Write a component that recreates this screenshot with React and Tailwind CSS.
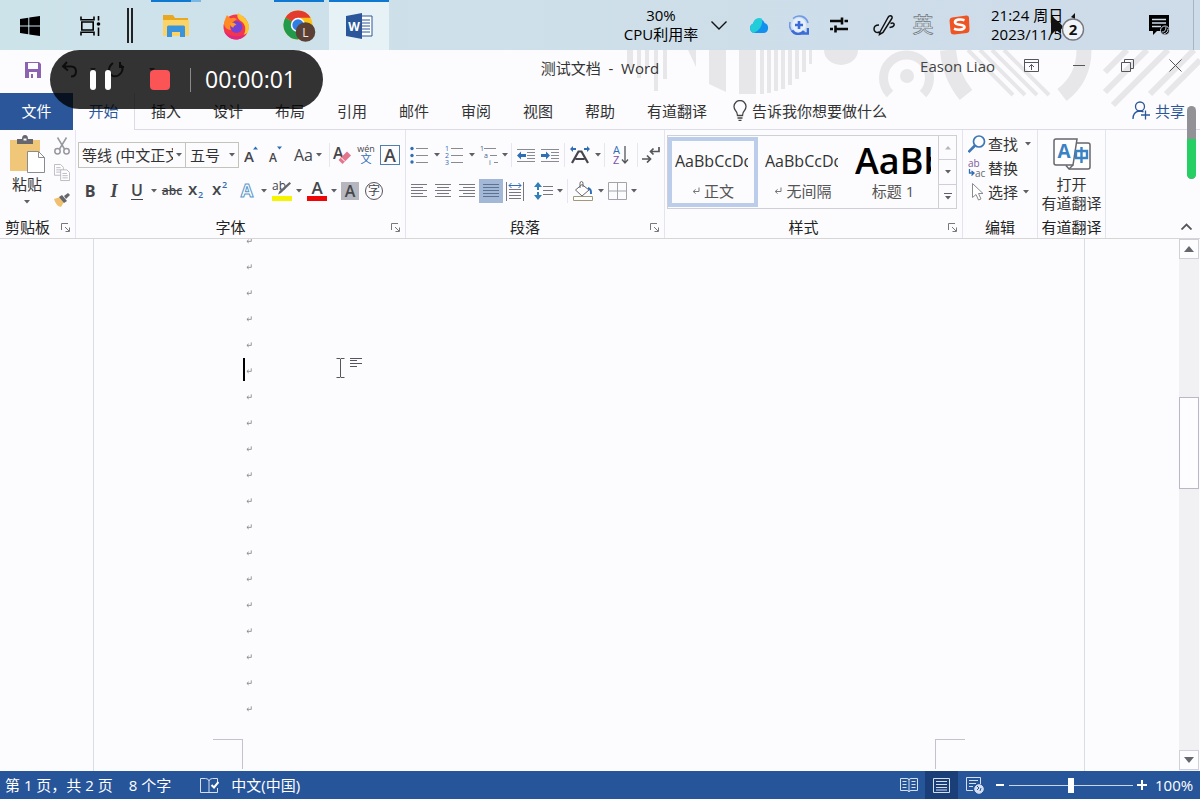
import { useState } from "react";

const TABS = ["开始", "插入", "设计", "布局", "引用", "邮件", "审阅", "视图", "帮助"];

const Caret = () => (
  <svg width="6" height="4" viewBox="0 0 6 4" className="shrink-0" aria-hidden="true">
    <path d="M0 0h6L3 3.5z" fill="#5f6066" />
  </svg>
);

const ReturnMark = ({ size = 6 }) => (
  <svg width={size} height={size} viewBox="0 0 8 8" className="shrink-0" aria-hidden="true">
    <path d="M7 0.5V4.5H1.5M3.6 2.4L1.2 4.5L3.6 6.6" fill="none" stroke="#77777c" strokeWidth="1" />
  </svg>
);

const Tool = ({ label, className = "w-6", children }) => (
  <button
    aria-label={label}
    className={`flex h-6 shrink-0 items-center justify-center text-[#44464b] hover:bg-[#d5e1f2] ${className}`}
  >
    {children}
  </button>
);

const Divider = () => <span className="mx-0.5 h-6 w-px shrink-0 bg-[#e6e6ee]" />;

const Group = ({ name, launcher = true, className, children }) => (
  <section aria-label={name} className={`flex shrink-0 flex-col border-r border-[#e4e4f0] ${className}`}>
    <div className="h-[86px]">{children}</div>
    <div className="flex h-[22px] items-center">
      <span className="flex-1 text-center leading-5 whitespace-nowrap">{name}</span>
      {launcher && (
        <button aria-label={`${name}设置`} className="flex w-5 justify-center">
          <svg width="9" height="9" viewBox="0 0 9 9" fill="none" stroke="#77777c">
            <path d="M0.5 7V0.5H7M4 4l4 4M8.5 4.5v4h-4" />
          </svg>
        </button>
      )}
    </div>
  </section>
);

/* ---------- Taskbar ---------- */

const TaskButton = ({ label, className = "", bar = "", children }) => (
  <button aria-label={label} className={`flex h-[50px] w-[60px] shrink-0 flex-col items-center ${className}`}>
    <span className={`h-[2px] w-full ${bar}`} />
    <span className="flex flex-1 items-center">{children}</span>
  </button>
);

const TrayButton = ({ label, className = "w-10", children }) => (
  <button aria-label={label} className={`flex h-[50px] shrink-0 items-center justify-center ${className}`}>
    {children}
  </button>
);

const Taskbar = () => (
  <header className="flex h-[50px] items-center bg-linear-to-r from-[#cde3ea] to-[#cedbe9] text-black">
    <TaskButton label="开始菜单">
      <svg width="20" height="20" viewBox="0 0 20 20">
        <path d="M0 3l8.3-1.2v7.8H0zM9.3 1.6L20 0v9.6H9.3zM0 10.5h8.3v7.8L0 17.1zM9.3 10.5H20V20L9.3 18.5z" />
      </svg>
    </TaskButton>
    <TaskButton label="任务视图">
      <svg width="21" height="20" viewBox="0 0 21 20" fill="none" stroke="#000" strokeWidth="1.6">
        <path d="M1 0.5v3.2h13V0.5M1 19.5v-3.2h13v3.2M1.8 6h11.4v8H1.8zM18.5 0v4.5M18.5 11.5V20" />
        <circle cx="18.5" cy="8" r="1.8" fill="#000" stroke="none" />
      </svg>
    </TaskButton>
    <span className="mr-[13px] ml-[7px] h-[35px] w-[6px] border-x-2 border-[#222]" />
    <TaskButton label="文件资源管理器" bar="bg-linear-to-r from-[#0f78d0] from-80% to-[#79b8e4] to-80% max-w-[50px]">
      <svg width="28" height="24" viewBox="0 0 28 24">
        <path d="M1 1h10l2 3h13v18H1z" fill="#e9a822" />
        <path d="M1 6h26v16H1z" fill="#fbd366" />
        <path d="M5 23V13q0-1.500 1.500-1.500h15q1.500 0 1.500 1.500v10h-5v-5h-8v5z" fill="#3a93dd" />
      </svg>
    </TaskButton>
    <TaskButton label="Firefox">
      <svg width="28" height="28" viewBox="0 0 28 28">
        <circle cx="14" cy="15" r="12.500" fill="#f4364c" />
        <path d="M16 1c5 3 10 7 11 13 0 7-4 11-8 12.500 3-3 5-7 4-12-1-4-4-5-6-7-2-2-2-4-1-6.500z" fill="#ffc52e" />
        <path d="M2 11C3 7 4 5 5 3c1 2 3 3 4 3.500C11 5 13 6 15 7l-4 3c-3 2-3 5-2 8-4 0-7-3-7-7z" fill="#ff8a25" />
        <path d="M2 19c2 5 7 8.500 12 8.500S23 25 25 21c-4 4-17 5-23-2z" fill="#e2257f" />
        <circle cx="14.500" cy="15" r="6" fill="#7542d8" />
        <path d="M8 11c3-1 5 0 6.500 2-2 0-3 1-3 2.500-2 0-3.500-2-3.500-4.500z" fill="#ff9b2a" />
      </svg>
    </TaskButton>
    <TaskButton label="Chrome" className="ml-[3px]" bar="bg-[#0f78d0] max-w-[50px]">
      <svg width="33" height="32" viewBox="0 0 33 32">
        <circle cx="15" cy="15" r="14.500" fill="#fbc116" />
        <path d="M15 15L2.440 7.750A14.500 14.500 0 0 1 27.560 7.750H15z" fill="#e33b2e" />
        <path d="M15 15L2.440 7.750A14.500 14.500 0 0 0 15 29.500L21.300 18.600z" fill="#229a4c" />
        <circle cx="15" cy="15" r="7.200" fill="#fff" />
        <circle cx="15" cy="15" r="5.700" fill="#2f7de6" />
        <circle cx="22.500" cy="22" r="9.800" fill="#5b4036" />
        <text x="22.500" y="26.500" fill="#f1e6e0" fontSize="12" textAnchor="middle">L</text>
      </svg>
    </TaskButton>
    <TaskButton label="Word" className="bg-[#e7f2f6]" bar="bg-[#0f78d0]">
      <svg width="27" height="26" viewBox="0 0 27 26">
        <path d="M13 3h13v20H13z" fill="#fff" stroke="#2b579a" />
        <path d="M16 7h8M16 10h8M16 13h8M16 16h8M16 19h8" stroke="#2b579a" />
        <path d="M0 3l16-3v26L0 23z" fill="#2b579a" />
        <text x="8" y="17.500" fill="#fff" fontSize="12" fontWeight="700" textAnchor="middle">W</text>
      </svg>
    </TaskButton>

    <div className="ml-auto flex items-center">
      <p className="w-[76px] text-center leading-[19px]">
        30%
        <br />
        CPU利用率
      </p>
      <TrayButton label="显示隐藏的图标">
        <svg width="16" height="9" viewBox="0 0 16 9" fill="none" stroke="#111" strokeWidth="1.400">
          <path d="M0.500 0.500L8 8l7.500-7.500" />
        </svg>
      </TrayButton>
      <TrayButton label="云盘">
        <svg width="20" height="17" viewBox="0 0 20 17">
          <path d="M5 16a5 5 0 0 1-.8-9.500A6 6 0 0 1 15.600 6 5.200 5.200 0 0 1 15 16z" fill="#1290ee" />
          <path d="M5 16a5 5 0 0 1-.8-9.500A6 6 0 0 1 13 1.800C14 8 11 13 5 16z" fill="#22cdda" />
        </svg>
      </TrayButton>
      <TrayButton label="电脑管家">
        <svg width="20" height="20" viewBox="0 0 20 20" fill="none">
          <circle cx="10" cy="10" r="7" fill="#e6effc" />
          <path d="M4 3.500A9 9 0 0 1 19 8M1.200 7A9 9 0 0 0 4 17" stroke="#6f9aea" strokeWidth="1.600" />
          <path d="M3 15.500c3 4.500 9 4.500 12 .5M13 18.500h6V13" stroke="#3c6cd6" strokeWidth="2.600" />
          <path d="M10 6v8M6 10h8" stroke="#3c6cd6" strokeWidth="2.600" />
        </svg>
      </TrayButton>
      <TrayButton label="音量设置">
        <svg width="18" height="16" viewBox="0 0 18 16" stroke="#0a0a0a" strokeWidth="2.600">
          <path d="M0 4h11M14.500 4H18M0 12h3M6.500 12H18M12 0.500v7M5.500 8.500v7" />
        </svg>
      </TrayButton>
      <TrayButton label="手写笔" className="w-[50px]">
        <svg width="22" height="22" viewBox="0 0 22 22" fill="none" stroke="#111" strokeWidth="1.500">
          <path d="M7 18L15 3.500q1.500-2.500 3.200-1.500T18.500 5L10 18.500 6.500 20.500zM6 11c-3.500 0-5 2-5 4s2 4.500 5.500 3M17.500 9.500c3-1.500 4.500.5 3 2.500-1 1.500-3 1-4 1.500" />
        </svg>
      </TrayButton>
      <TrayButton label="输入法" className="w-7">
        <svg width="22" height="24" viewBox="0 0 22 24">
          <text x="11" y="19" textAnchor="middle" fontSize="21" fill="#e8eef4" stroke="#6d7780" strokeWidth="0.700">
            英
          </text>
        </svg>
      </TrayButton>
      <TrayButton label="搜狗输入法" className="w-11">
        <svg width="21" height="20" viewBox="0 0 21 20">
          <path d="M3 2.500L17.500 0.500Q20 .5 20 3l.5 12q0 2.500-2.500 3L5 19.500Q2 19.500 1.600 17L.5 5.500Q.5 3 3 2.500z" fill="#ef5424" />
          <path
            d="M15.500 5.200C12 3.800 6 4.300 6 7.300c0 3.400 9.500 1.700 9.500 4.700 0 3-6.500 3.400-10.500 1.800"
            fill="none"
            stroke="#fff"
            strokeWidth="2.600"
          />
        </svg>
      </TrayButton>
      <p className="ml-[10px] w-[76px] leading-[19px] whitespace-nowrap">
        21:24 周日
        <br />
        2023/11/5
      </p>
      <TrayButton label="通知" className="ml-[72px] w-10">
        <svg width="22" height="21" viewBox="0 0 22 21">
          <path d="M1 0h20v13l-6 3H9l-4 4v-4H1z" />
          <path d="M4 4.500h14M4 8h14M4 11.500h9" stroke="#cedbe9" strokeWidth="1.500" />
          <circle cx="17" cy="15.500" r="4.500" stroke="#cedbe9" />
          <path d="M14 17q4 0 4-5M15.500 19q4.500-1 4.500-5" stroke="#cedbe9" fill="none" />
        </svg>
      </TrayButton>
      <span className="mr-[6px] ml-3.5 h-[50px] w-px bg-[#a9b4c0]" />
    </div>
  </header>
);

/* ---------- Title bar and tabs ---------- */

const TitlePattern = () => (
  <svg
    width="580"
    height="60"
    viewBox="620 50 580 60"
    className="pointer-events-none absolute top-0 right-0"
    fill="none"
    stroke="#e7e7e9"
    aria-hidden="true"
  >
    <g fill="#e7e7e9" stroke="none">
      <path d="M627 50h6v18h-6zM637 50h4v28h-4zM645 50h4v16h-4zM654 50h4v41h-4zM663 50h4v29h-4z" />
      <path d="M688 50h8v17zM709 50h17v42l-17-8zM739 50h17v44h-17z" />
      <path d="M760 50h4v44h-4zM767 50h4v43h-4zM774 50h4v41h-4zM781 50h4v39h-4zM788 50h4v35h-4zM795 50h4v29h-4zM802 50h4v22h-4zM809 50h3v14h-3z" />
      <path d="M824 50h34a17 15 0 0 1-34 0z" />
      <circle cx="907" cy="76" r="7" />
    </g>
    <path d="M890 94a23 23 0 1 1 33 0" strokeWidth="9" />
    <path d="M948 50q2 25 18 45" strokeWidth="16" />
    <path d="M1084 50q0 28-22 45" strokeWidth="15" />
    <path d="M968 50l45 45M980 50l45 45M992 50l45 45M1004 50l45 45" strokeWidth="4" />
    <path d="M1105 72l22-22M1105 92l42-42M1113 105l55-55M1150 94l44-44M1166 94l34-34" strokeWidth="6" />
  </svg>
);

const TitleBar = () => (
  <div className="relative grid h-[43px] grid-cols-[1fr_auto_1fr] items-center pb-2">
    <TitlePattern />
    <div className="flex items-center pt-1 pl-[25px] text-[#444]">
      <button aria-label="保存">
        <svg width="16" height="16" viewBox="0 0 16 16">
          <path d="M0 0h14l2 2v14H0z" fill="#8d62b0" />
          <path d="M3 1h10v6H3zM4 10h8v6H4z" fill="#fdfdff" />
          <path d="M6 12h2v4H6z" fill="#8d62b0" />
        </svg>
      </button>
      <button aria-label="撤消" className="ml-5 flex items-center gap-3">
        <svg width="17" height="17" viewBox="0 0 17 17" fill="none" stroke="#444" strokeWidth="2">
          <path d="M6 1L2 5.500l5 4M2 5.500h8q5 0 5 5t-5 5" />
        </svg>
        <Caret />
      </button>
      <button aria-label="重复" className="ml-3 flex items-center gap-6">
        <svg width="17" height="17" viewBox="0 0 17 17" fill="none" stroke="#444" strokeWidth="2">
          <path d="M12 1v5h4M13 4q3 4 0 8t-8 3q-4-2-4-6t4-7" />
        </svg>
        <Caret />
      </button>
    </div>
    <h1 className="relative text-[#333] whitespace-pre">测试文档  -  Word</h1>
    <div className="relative flex items-center justify-end pb-1 text-[#444]">
      <button className="mr-3">Eason Liao</button>
      <button aria-label="功能区显示选项" className="flex h-6 w-12 items-center justify-center">
        <svg width="15" height="13" viewBox="0 0 15 13" fill="none" stroke="#55565b">
          <path d="M0.500 0.500h14v12H0.500zM0.500 3.500h14M7.500 11V5.500M5 8l2.500-2.500L10 8" />
        </svg>
      </button>
      <button aria-label="最小化" className="flex h-6 w-12 items-center justify-center">
        <span className="h-px w-3 bg-[#55565b]" />
      </button>
      <button aria-label="还原" className="flex h-6 w-12 items-center justify-center">
        <svg width="13" height="13" viewBox="0 0 13 13" fill="none" stroke="#55565b">
          <path d="M0.500 3.500h9v9h-9zM3.500 3.500v-3h9v9h-3" />
        </svg>
      </button>
      <button aria-label="关闭" className="mr-px flex h-6 w-12 items-center justify-center">
        <svg width="13" height="13" viewBox="0 0 13 13" fill="none" stroke="#55565b">
          <path d="M0.500 0.500l12 12M12.500 0.500l-12 12" />
        </svg>
      </button>
    </div>
  </div>
);

const TabBar = ({ active, onSelect }) => (
  <nav className="relative flex h-[37px] text-[#333]">
    <button className="w-[73px] bg-[#2b579a] pb-0.5 text-white">文件</button>
    {TABS.map((tab) => (
      <button
        key={tab}
        onClick={() => onSelect(tab)}
        className={
          tab === active
            ? "w-[62px] border-r border-[#dcdce6] bg-[#fdfdff] pb-0.5 text-[#2b579a]"
            : "w-[62px] border-b border-[#dcdce6] pb-px"
        }
      >
        {tab}
      </button>
    ))}
    <button className="w-[92px] border-b border-[#dcdce6] pb-px">有道翻译</button>
    <label className="flex flex-1 items-center gap-[5px] border-b border-[#dcdce6] pb-px pl-[10px]">
      <svg width="14" height="21" viewBox="0 0 14 21" fill="none" stroke="#444" strokeWidth="1.300">
        <path d="M4.500 15.500q0-3-2-5a6 6 0 1 1 9 0q-2 2-2 5zM4.500 18h5M5.500 20.300h3" />
      </svg>
      <input
        aria-label="告诉我你想要做什么"
        placeholder="告诉我你想要做什么"
        className="w-40 bg-transparent outline-none placeholder:text-[#333]"
      />
    </label>
    <button className="flex items-center gap-1 border-b border-[#dcdce6] pr-[15px] pb-px text-[#2b579a]">
      <svg width="19" height="19" viewBox="0 0 19 19" fill="none" stroke="#2b579a" strokeWidth="1.300">
        <circle cx="8" cy="5.500" r="4.500" />
        <path d="M1 18q0-7 6-8 3 0 4.500 1M13.500 9.500v9M9 14h9" />
      </svg>
      共享
    </button>
  </nav>
);

/* ---------- Ribbon groups ---------- */

const ClipboardGroup = () => (
  <Group name="剪贴板" className="w-[76px]">
    <div className="flex pt-1">
      <button className="flex w-[54px] flex-col items-center">
        <svg width="36" height="40" viewBox="0 0 36 40">
          <path d="M1 6h30v31H1z" fill="#f0c678" />
          <path d="M8 5h5q0-4 3-4t3 4h5v5H8z" fill="#66676d" />
          <path d="M14.500 4.500h3v2h-3z" fill="#fff" />
          <path d="M18.500 17.500h11l6 6v15h-17z" fill="#fff" stroke="#8a8b90" />
          <path d="M29.500 17.500v6h6" fill="none" stroke="#8a8b90" />
        </svg>
        <span className="leading-5 text-[#333]">粘贴</span>
        <span className="flex h-4 items-center">
          <Caret />
        </span>
      </button>
      <div className="flex flex-col">
        <Tool label="剪切" className="mb-[3px] w-4">
          <svg width="16" height="18" viewBox="0 0 16 18" fill="none" stroke="#97989d" strokeWidth="1.500">
            <path d="M3.500 0.500l7 11.500M12.500 0.500l-7 11.500" />
            <circle cx="3.500" cy="14.300" r="2.700" />
            <circle cx="12.500" cy="14.300" r="2.700" />
          </svg>
        </Tool>
        <Tool label="复制" className="mb-[3px] w-4">
          <svg width="18" height="20" viewBox="0 0 18 20" fill="#fff" stroke="#b3b3bd">
            <path d="M0.500 0.500h7l3 3v9h-10zM2.500 4h5M2.500 6.500h6M2.500 9h6" />
            <path d="M7.500 6.500h7l3 3v9h-10zM9.500 10.500h5M9.500 13h6M9.500 15.500h6" />
          </svg>
        </Tool>
        <Tool label="格式刷" className="w-4">
          <svg width="16" height="14" viewBox="0 0 16 14">
            <path d="M0 6l6-2 4 5-3 5q-5-1-7-8z" fill="#efc06e" />
            <path d="M5 4l3-2 5 6-3 2zM10 3l4-3 2 2-4 4z" fill="#66676d" />
          </svg>
        </Tool>
      </div>
    </div>
  </Group>
);

const FontGroup = () => (
  <Group name="字体" className="w-[330px]">
    <div className="mt-3 flex h-[26px] items-center pl-0.5">
      <div className="flex h-[26px] w-[108px] items-center border border-[#c3c4ba] pr-[3px]">
        <select
          aria-label="字体名称"
          className="mr-[3px] min-w-0 flex-1 appearance-none overflow-hidden bg-transparent pl-[3px] text-[#333]"
        >
          <option>等线 (中文正文)</option>
        </select>
        <Caret />
      </div>
      <div className="flex h-[26px] w-[53px] items-center border border-l-0 border-[#c3c4ba] pr-[3px]">
        <select aria-label="字号" className="min-w-0 flex-1 appearance-none bg-transparent pl-1 text-[#333]">
          <option>五号</option>
        </select>
        <Caret />
      </div>
      <Tool label="增大字号">
        <svg width="14" height="18" viewBox="0 0 14 18" fill="#44464b">
          <text x="0" y="16" fontSize="15" fontWeight="600">A</text>
          <path d="M9 3.500L11.500 0.500 14 3.500z" fill="#2f6db5" />
        </svg>
      </Tool>
      <Tool label="减小字号">
        <svg width="14" height="18" viewBox="0 0 14 18" fill="#44464b">
          <text x="1" y="16" fontSize="12" fontWeight="600">A</text>
          <path d="M9 0.500h5L11.500 3.500z" fill="#2f6db5" />
        </svg>
      </Tool>
      <Tool label="更改大小写" className="w-[42px] gap-[3px]">
        <span className="text-[16px]">Aa</span>
        <Caret />
      </Tool>
      <span className="h-6 w-px bg-[#e6e6ee]" />
      <Tool label="清除所有格式">
        <svg width="18" height="20" viewBox="0 0 18 20">
          <text x="0" y="14" fontSize="16" fontWeight="600" fill="#44464b">A</text>
          <path d="M5.500 15L14 6.500l4 4L9.500 19z" fill="#e2768c" />
          <path d="M8 12.500l4 4" stroke="#fff" />
        </svg>
      </Tool>
      <Tool label="拼音指南">
        <svg width="18" height="20" viewBox="0 0 18 20" fill="#44464b">
          <text x="9" y="7" fontSize="9" textAnchor="middle">wén</text>
          <text x="9" y="18" fontSize="11" textAnchor="middle" fill="#2f6db5">文</text>
        </svg>
      </Tool>
      <Tool label="字符边框">
        <span className="flex h-5 w-5 items-center justify-center border border-[#4f7fae] text-[18px] leading-none font-semibold">
          A
        </span>
      </Tool>
    </div>
    <div className="mt-[10px] flex h-[26px] items-center pl-0.5">
      <Tool label="加粗">
        <span className="text-[16px] font-bold">B</span>
      </Tool>
      <Tool label="倾斜">
        <span className="font-['Liberation_Serif',serif] text-[18px] font-bold italic">I</span>
      </Tool>
      <Tool label="下划线" className="w-[22px]">
        <span className="border-b border-[#44464b] text-[16px] leading-[17px] font-semibold">U</span>
      </Tool>
      <Tool label="下划线样式" className="w-3">
        <Caret />
      </Tool>
      <Tool label="删除线">
        <span className="text-[12px] font-semibold line-through">abc</span>
      </Tool>
      <Tool label="下标">
        <svg width="16" height="20" viewBox="0 0 16 20" fill="#44464b">
          <text x="0" y="14" fontSize="17" fontWeight="600">x</text>
          <text x="10" y="17" fontSize="9" fontWeight="600" fill="#2f6db5">2</text>
        </svg>
      </Tool>
      <Tool label="上标">
        <svg width="16" height="20" viewBox="0 0 16 20" fill="#44464b">
          <text x="0" y="14" fontSize="17" fontWeight="600">x</text>
          <text x="10" y="7" fontSize="9" fontWeight="600" fill="#2f6db5">2</text>
        </svg>
      </Tool>
      <Tool label="文本效果" className="ml-1 w-[22px]">
        <svg width="16" height="18" viewBox="0 0 16 18">
          <text x="8" y="15" fontSize="18" fontWeight="700" fill="#fff" stroke="#5b97c9" textAnchor="middle">A</text>
        </svg>
      </Tool>
      <Tool label="文本效果选项" className="w-3">
        <Caret />
      </Tool>
      <Tool label="突出显示">
        <svg width="20" height="20" viewBox="0 0 20 20">
          <text x="0" y="9" fontSize="12" fill="#44464b">ab</text>
          <path d="M17.500 1l1.500 1.500L9 12l-3 1.500L7.500 10z" fill="#66676d" />
          <path d="M0 15h20v5H0z" fill="#f6f400" />
        </svg>
      </Tool>
      <Tool label="突出显示颜色" className="w-[10px]">
        <Caret />
      </Tool>
      <Tool label="字体颜色" className="w-[26px]">
        <svg width="20" height="20" viewBox="0 0 20 20">
          <text x="10" y="13" fontSize="17" fontWeight="600" fill="#44464b" textAnchor="middle">A</text>
          <path d="M0 15h20v5H0z" fill="#ee0505" />
        </svg>
      </Tool>
      <Tool label="更多字体颜色" className="w-2">
        <Caret />
      </Tool>
      <Tool label="字符底纹">
        <span className="flex h-[18px] w-[18px] items-center justify-center bg-[#b6b7be] text-[16px] font-semibold">
          A
        </span>
      </Tool>
      <Tool label="带圈字符">
        <span className="flex h-[18px] w-[18px] items-center justify-center rounded-full border border-[#55565b] text-[12px] leading-none">
          字
        </span>
      </Tool>
    </div>
  </Group>
);

const LinesIcon = ({ d, color = "#77787e" }) => (
  <svg width="16" height="15" viewBox="0 0 16 15" stroke={color}>
    <path d={d} />
  </svg>
);

const ParagraphGroup = () => (
  <Group name="段落" className="w-[259px]">
    <div className="mt-3 flex h-[26px] items-center pl-px">
      <Tool label="项目符号">
        <svg width="18" height="18" viewBox="0 0 18 18" stroke="#8a8b90">
          <path d="M6 2.500h12M6 9.500h12M6 16.500h12" />
          <g fill="#2f6db5" stroke="none">
            <circle cx="2" cy="2.500" r="1.700" />
            <circle cx="2" cy="9.500" r="1.700" />
            <circle cx="2" cy="16" r="1.700" />
          </g>
        </svg>
      </Tool>
      <Tool label="项目符号选项" className="w-[11px]">
        <Caret />
      </Tool>
      <Tool label="编号">
        <svg width="18" height="20" viewBox="0 0 18 20">
          <path d="M6 3.500h12M6 10.500h12M6 17.500h12" stroke="#8a8b90" />
          <g fontSize="7" fill="#2f6db5">
            <text x="0" y="6">1</text>
            <text x="0" y="13">2</text>
            <text x="0" y="20">3</text>
          </g>
        </svg>
      </Tool>
      <Tool label="编号选项" className="w-[11px]">
        <Caret />
      </Tool>
      <Tool label="多级列表">
        <svg width="18" height="20" viewBox="0 0 18 20">
          <path d="M4 3.500h12M10 10.500h7M14 17.500h4" stroke="#8a8b90" />
          <g fontSize="7" fill="#44628a">
            <text x="0" y="6">1</text>
            <text x="4" y="13">a</text>
            <text x="9" y="20">i</text>
          </g>
        </svg>
      </Tool>
      <Tool label="多级列表选项" className="w-2">
        <Caret />
      </Tool>
      <Divider />
      <Tool label="减少缩进量">
        <svg width="18" height="15" viewBox="0 0 18 15">
          <path d="M0 1.500h18M10 4.500h8M10 7.500h8M10 10.500h8M0 13.500h18" stroke="#8a8b90" />
          <path d="M0 7.500L4 3.500v2.500h5v3H4v2.500z" fill="#2f6db5" />
        </svg>
      </Tool>
      <Tool label="增加缩进量">
        <svg width="18" height="15" viewBox="0 0 18 15">
          <path d="M0 1.500h18M10 4.500h8M10 7.500h8M10 10.500h8M0 13.500h18" stroke="#8a8b90" />
          <path d="M9 7.500L5 3.500v2.500H0v3h5v2.500z" fill="#2f6db5" />
        </svg>
      </Tool>
      <Divider />
      <Tool label="中文版式" className="w-[26px]">
        <svg width="20" height="18" viewBox="0 0 20 18">
          <path d="M2 17L8.500 5.500h3L18 17M5.500 13h9" fill="none" stroke="#44464b" strokeWidth="2.200" />
          <path d="M0 3L3 0v2h3v2H3v2zM20 3L17 0v2h-3v2h3v2z" fill="#2f6db5" />
        </svg>
      </Tool>
      <Tool label="中文版式选项" className="w-[9px]">
        <Caret />
      </Tool>
      <Divider />
      <Tool label="排序" className="w-7">
        <svg width="16" height="20" viewBox="0 0 16 20">
          <text x="0" y="9" fontSize="11" fill="#2f6db5">A</text>
          <text x="0" y="19" fontSize="11" fill="#7a4fa8">Z</text>
          <path d="M12 1v17M9 14.500l3 3.500 3-3.500" fill="none" stroke="#55565b" strokeWidth="1.300" />
        </svg>
      </Tool>
      <Divider />
      <Tool label="显示编辑标记" className="w-[22px]">
        <svg width="18" height="16" viewBox="0 0 18 16" fill="none" stroke="#55565b" strokeWidth="1.700">
          <path d="M17 0v4.500H9M11.500 1.500L8.500 4.500l3 3M0 12h7.500M5 8.500L8.500 12 5 15.500" />
        </svg>
      </Tool>
    </div>
    <div className="mt-[10px] flex h-[26px] items-center pl-px">
      <Tool label="左对齐">
        <LinesIcon d="M0 .5h16M0 3.500h12M0 6.500h16M0 9.500h12M0 12.500h16" />
      </Tool>
      <Tool label="居中">
        <LinesIcon d="M0 .5h16M2 3.500h12M0 6.500h16M2 9.500h12M0 12.500h16" />
      </Tool>
      <Tool label="右对齐">
        <LinesIcon d="M0 .5h16M4 3.500h12M0 6.500h16M4 9.500h12M0 12.500h16" />
      </Tool>
      <Tool label="两端对齐" className="w-6 bg-[#a3b8d6]">
        <LinesIcon d="M0 .5h16M0 3.500h16M0 6.500h16M0 9.500h16M0 12.500h16" color="#5d7190" />
      </Tool>
      <Tool label="分散对齐">
        <svg width="18" height="19" viewBox="0 0 18 19" fill="none" stroke="#77787e">
          <path d="M0.500 0v19M17.500 0v19M3 7.500h12M3 10.500h12M3 13.500h12M3 16.500h12" />
          <path d="M3 3.500h12M5.500 1L3 3.500 5.500 6M12.500 1L15 3.500 12.500 6" stroke="#2f6db5" />
        </svg>
      </Tool>
      <Tool label="行和段落间距" className="ml-1 w-6">
        <svg width="19" height="18" viewBox="0 0 19 18">
          <path d="M9 4.500h10M9 8.500h10M9 12.500h10" stroke="#77787e" />
          <path d="M4 0l4 5H5v8h3l-4 5-4-5h3V5H0z" fill="#2f7fb8" />
          <path d="M0 9h8" stroke="#fdfdff" strokeWidth="2" />
        </svg>
      </Tool>
      <Tool label="行距选项" className="w-[10px]">
        <Caret />
      </Tool>
      <Divider />
      <Tool label="底纹" className="w-[26px]">
        <svg width="21" height="20" viewBox="0 0 21 20" fill="none" stroke="#66676d">
          <path d="M9 3.500l7 5.500-7 6-6.500-6zM7 7V2.500Q7 .5 8.500 .5T10 2.500V6" fill="#fff" />
          <path d="M0.500 15.500h19v4h-19z" fill="#fff" stroke="#a09a7c" />
          <path d="M15 7q3.500 1 3 6" stroke="#2f6db5" strokeWidth="2" />
        </svg>
      </Tool>
      <Tool label="底纹选项" className="w-[9px]">
        <Caret />
      </Tool>
      <Tool label="边框">
        <svg width="19" height="18" viewBox="0 0 19 18" fill="none" stroke="#a3a4aa">
          <path d="M0.500 0.500h18v17h-18zM9.500 0.500v17M0.500 9h18" />
        </svg>
      </Tool>
      <Tool label="边框选项" className="w-[10px]">
        <Caret />
      </Tool>
    </div>
  </Group>
);

const StyleCard = ({ sample, name, mark, selected }) => (
  <button
    className={`flex h-[70px] w-[90px] flex-col items-center border-4 px-[3px] ${
      selected ? "border-[#bccdeb]" : "border-transparent"
    }`}
  >
    <span className="flex h-10 w-full items-center overflow-hidden">{sample}</span>
    <span className="flex items-center gap-1 leading-5 whitespace-nowrap text-[#555]">
      {mark && <ReturnMark size={8} />}
      {name}
    </span>
  </button>
);

const BodySample = () => <span className="mr-[3px] overflow-hidden text-[16px] text-[#333]">AaBbCcDd</span>;

const StylesGroup = () => (
  <Group name="样式" className="w-[298px]">
    <div className="mt-[5px] ml-0.5 flex h-[74px] w-[290px] border border-[#cfd0d6] pt-px">
      <div className="flex flex-1">
        <StyleCard selected mark name="正文" sample={<BodySample />} />
        <StyleCard mark name="无间隔" sample={<BodySample />} />
        <StyleCard name="标题 1" sample={<span className="text-[36px] leading-10 font-semibold text-black">AaBb</span>} />
      </div>
      <div className="-mt-px flex w-[19px] flex-col divide-y divide-[#cfd0d6] border-l border-[#cfd0d6]">
        <button aria-label="上一行" className="flex flex-1 items-center justify-center">
          <svg width="6" height="4" viewBox="0 0 6 4">
            <path d="M0 3.500h6L3 0z" fill="#b5b6bb" />
          </svg>
        </button>
        <button aria-label="下一行" className="flex flex-1 items-center justify-center">
          <Caret />
        </button>
        <button aria-label="其他样式" className="flex flex-1 flex-col items-center justify-center gap-0.5">
          <span className="h-px w-2 bg-[#5f6066]" />
          <Caret />
        </button>
      </div>
    </div>
  </Group>
);

const EditingGroup = () => (
  <Group name="编辑" launcher={false} className="w-[75px]">
    <div className="flex flex-col pt-0.5 pl-[5px] text-[#333]">
      <button className="flex h-6 items-center">
        <svg width="18" height="18" viewBox="0 0 18 18" fill="none" stroke="#3b76b5">
          <circle cx="11" cy="6.500" r="5.500" strokeWidth="1.700" />
          <path d="M7 10.500L0.500 17" strokeWidth="2.600" />
        </svg>
        <span className="mr-[7px] ml-0.5">查找</span>
        <Caret />
      </button>
      <button className="flex h-6 items-center">
        <svg width="18" height="19" viewBox="0 0 18 19" fill="#66676d">
          <text x="0" y="8" fontSize="10" fill="#7d5b9c">ab</text>
          <text x="7" y="18" fontSize="10">ac</text>
          <path d="M1.500 10v4h4M3.500 12l2.500 2-2.500 2.500" fill="none" stroke="#2f6db5" strokeWidth="1.300" />
        </svg>
        <span className="ml-0.5">替换</span>
      </button>
      <button className="flex h-6 items-center">
        <svg width="18" height="18" viewBox="0 0 18 18" fill="#fff" stroke="#8a8b90">
          <path d="M4.500 0.500v14l3.500-3 2.500 5.500 2.500-1-2.500-5.500h4.500z" />
        </svg>
        <span className="mr-[5px] ml-0.5">选择</span>
        <Caret />
      </button>
    </div>
  </Group>
);

const YoudaoGroup = () => (
  <Group name="有道翻译" launcher={false} className="w-[68px]">
    <button className="flex w-full flex-col items-center pt-2">
      <svg width="38" height="33" viewBox="0 0 38 33" fill="none" stroke="#66676d" strokeWidth="1.500">
        <path d="M22 5h13q2 0 2 2v22q0 2-2 2H16l-3-3.500" fill="#fff" />
        <path d="M3 1h21l-4 26H3q-2 0-2-2V3q0-2 2-2z" fill="#fff" />
        <path d="M20 27l-4 4" />
        <text x="11" y="20" fontSize="19" fontWeight="700" fill="#3b82c4" stroke="none" textAnchor="middle">A</text>
        <path d="M23 13h11v7H23zM28.500 9v16" stroke="#3b82c4" strokeWidth="2.400" />
      </svg>
      <span className="mt-1 leading-[19px] whitespace-nowrap text-[#333]">
        打开
        <br />
        有道翻译
      </span>
    </button>
  </Group>
);

/* ---------- Document ---------- */

const DocumentArea = () => (
  <main className="flex min-h-0 flex-1">
    <div className="mr-[94px] ml-[93px] flex flex-1 flex-col overflow-hidden border-x border-[#dcdce4]">
      <div className="-mt-[11px] pl-[149px]">
        {Array.from({ length: 19 }, (_, i) => (
          <p key={i} className="flex h-[26px] items-center">
            <span className={i === 5 ? "h-[23px] w-[2px] self-start bg-black" : "h-[23px] w-[2px]"} />
            <span className="ml-px flex">
              <ReturnMark />
            </span>
            {i === 5 && (
              <svg width="27" height="20" viewBox="0 0 27 20" className="ml-[84px] self-start" fill="none" stroke="#55565b">
                <path d="M0.500 0.500h3.500l.5 1 .5-1h3.500M4.500 1v18M0.500 19.500h3.500l.5-1 .5 1h3.500M14 0.500h12M14 2.500h7M14 5.500h12M14 8.500h7" />
              </svg>
            )}
          </p>
        ))}
      </div>
      <div className="mt-auto mb-0.5 flex justify-between px-[119px]">
        <span className="h-[30px] w-[30px] border-t border-r border-[#c3c3cb]" />
        <span className="h-[30px] w-[30px] border-t border-l border-[#c3c3cb]" />
      </div>
    </div>
    <div className="mr-px flex w-5 flex-col bg-[#f1f1f3] pb-px">
      <button aria-label="向上滚动" className="flex h-5 items-center justify-center border border-[#d0d0d6] bg-[#fdfdff]">
        <svg width="10" height="6" viewBox="0 0 10 6">
          <path d="M0 6h10L5 0z" fill="#66676d" />
        </svg>
      </button>
      <div className="flex flex-1 flex-col">
        <span className="grow-[138]" />
        <span className="h-[92px] border border-[#b9b9c5] bg-[#fdfdff]" />
        <span className="grow-[262]" />
      </div>
      <button aria-label="向下滚动" className="flex h-5 items-center justify-center border border-[#d0d0d6] bg-[#fdfdff]">
        <svg width="10" height="6" viewBox="0 0 10 6">
          <path d="M0 0h10L5 6z" fill="#66676d" />
        </svg>
      </button>
    </div>
  </main>
);

const StatusBar = () => {
  const [zoom, setZoom] = useState(100);

  return (
    <footer className="mb-px flex h-7 items-center bg-[#27559a] text-white">
      <span className="ml-[5px]">第 1 页，共 2 页</span>
      <span className="ml-4">8 个字</span>
      <button aria-label="校对" className="ml-[29px]">
        <svg width="19" height="17" viewBox="0 0 19 17" fill="none" stroke="#d5dff0">
          <path d="M9 15.500H0.500V1.500h5q3 0 3.500 2.500v12M9 4q.5-2.500 3.500-2.500h5V5M17.500 11v4.500H9" />
          <path d="M11.500 8l2.500 2.500L18.500 5" stroke="#fff" strokeWidth="2" />
        </svg>
      </button>
      <button className="ml-3">中文(中国)</button>
      <div className="ml-auto flex h-full items-center">
        <button aria-label="阅读视图" className="flex h-full w-[33px] items-center justify-center">
          <svg width="18" height="16" viewBox="0 0 18 16" fill="none" stroke="#d5dff0">
            <path d="M9 2v13M0.500 1.500H7q2 0 2 1.500 0-1.500 2-1.500h6.500v12H11q-2 0-2 1.500 0-1.500-2-1.500H0.500zM2.500 4.500h4M2.500 7.500h4M2.500 10.500h4M11.500 4.500h4M11.500 7.500h4M11.500 10.500h4" />
          </svg>
        </button>
        <button aria-label="页面视图" className="flex h-full w-[33px] items-center justify-center bg-[#1a3f78]">
          <svg width="17" height="15" viewBox="0 0 17 15" fill="none" stroke="#d5dff0">
            <path d="M0.500 0.500h16v14h-16zM3 3.500h11M3 6.500h11M3 9.500h11M3 12h11" />
          </svg>
        </button>
        <button aria-label="Web 版式视图" className="flex h-full w-[33px] items-center justify-center">
          <svg width="18" height="17" viewBox="0 0 18 17" fill="none" stroke="#d5dff0">
            <path d="M7 13.500H0.500V0.500h14V7M3 3.500h9M3 6.500h7M3 9.500h4" />
            <circle cx="13" cy="12" r="4.300" fill="#d5dff0" />
            <path d="M11 9l2 2-2 2M15 11l-1 3" stroke="#27559a" />
          </svg>
        </button>
        <button aria-label="缩小" className="flex w-[18px] items-center justify-center">
          <span className="h-[2px] w-2 bg-white" />
        </button>
        <input
          type="range"
          aria-label="缩放"
          min="10"
          max="190"
          value={zoom}
          onChange={(e) => setZoom(Number(e.target.value))}
          className="h-4 w-[124px] appearance-none bg-transparent bg-[linear-gradient(#c9d6ea,#c9d6ea)] bg-[length:100%_1px] bg-center bg-no-repeat [&::-webkit-slider-thumb]:h-[15px] [&::-webkit-slider-thumb]:w-[6px] [&::-webkit-slider-thumb]:appearance-none [&::-webkit-slider-thumb]:bg-white"
        />
        <button aria-label="放大" className="flex w-[18px] items-center justify-center">
          <svg width="10" height="10" viewBox="0 0 10 10" stroke="#fff" strokeWidth="2">
            <path d="M0 5h10M5 0v10" />
          </svg>
        </button>
        <span className="ml-1 w-[45px]">{zoom}%</span>
      </div>
    </footer>
  );
};

/* ---------- Overlays ---------- */

const RecorderPill = () => (
  <div className="absolute top-[50px] left-[50px] flex h-[59px] w-[273px] items-center rounded-full bg-black/80 pl-10 text-white">
    <button aria-label="暂停录制" className="flex gap-[9px]">
      <span className="h-5 w-[6px] rounded-sm bg-white" />
      <span className="h-5 w-[6px] rounded-sm bg-white" />
    </button>
    <button aria-label="停止录制" className="ml-[39px] h-5 w-5 rounded-sm bg-[#fb5457]" />
    <span className="ml-5 h-6 w-px bg-[#8a8a8a]" />
    <time className="ml-[14px] pb-px text-[23px] leading-none">00:00:01</time>
  </div>
);

const PointerBadge = () => (
  <svg width="36" height="32" viewBox="0 0 36 32" className="absolute top-[11px] right-[115px]" aria-hidden="true">
    <path d="M2 3v21l5-5 5 4v-5l3-1-4-5-5-4z" fill="#111" />
    <path d="M22 6l4-4v6z" fill="#111" />
    <circle cx="24" cy="18.500" r="10.500" fill="#f1f4f8" stroke="#77797e" strokeWidth="1.400" />
    <text x="24" y="24" fontSize="15" fontWeight="700" textAnchor="middle" fill="#111">2</text>
  </svg>
);

const App = () => {
  const [activeTab, setActiveTab] = useState("开始");

  return (
    <div className="relative flex min-h-screen flex-col bg-[#fcfcfe] font-['Open_Sans','Noto_Sans_CJK_SC',sans-serif] text-[15px] leading-5 text-[#222]">
      <Taskbar />
      <TitleBar />
      <TabBar active={activeTab} onSelect={setActiveTab} />

      <div className="flex border-b border-[#d6d6d6]">
        <ClipboardGroup />
        <FontGroup />
        <ParagraphGroup />
        <StylesGroup />
        <EditingGroup />
        <YoudaoGroup />
        <button aria-label="折叠功能区" className="mt-auto mr-2 mb-2 ml-auto">
          <svg width="11" height="7" viewBox="0 0 11 7" fill="none" stroke="#55565b" strokeWidth="1.800">
            <path d="M0.500 6.500l5-5 5 5" />
          </svg>
        </button>
      </div>

      <DocumentArea />
      <StatusBar />

      <RecorderPill />
      <PointerBadge />
      <div className="absolute top-[106px] right-1 flex h-[73px] w-[9px] flex-col overflow-hidden rounded-full bg-[#929296]">
        <span className="mt-auto h-10 rounded-b-full bg-[#25cf63]" />
      </div>
    </div>
  );
};

export default App;
